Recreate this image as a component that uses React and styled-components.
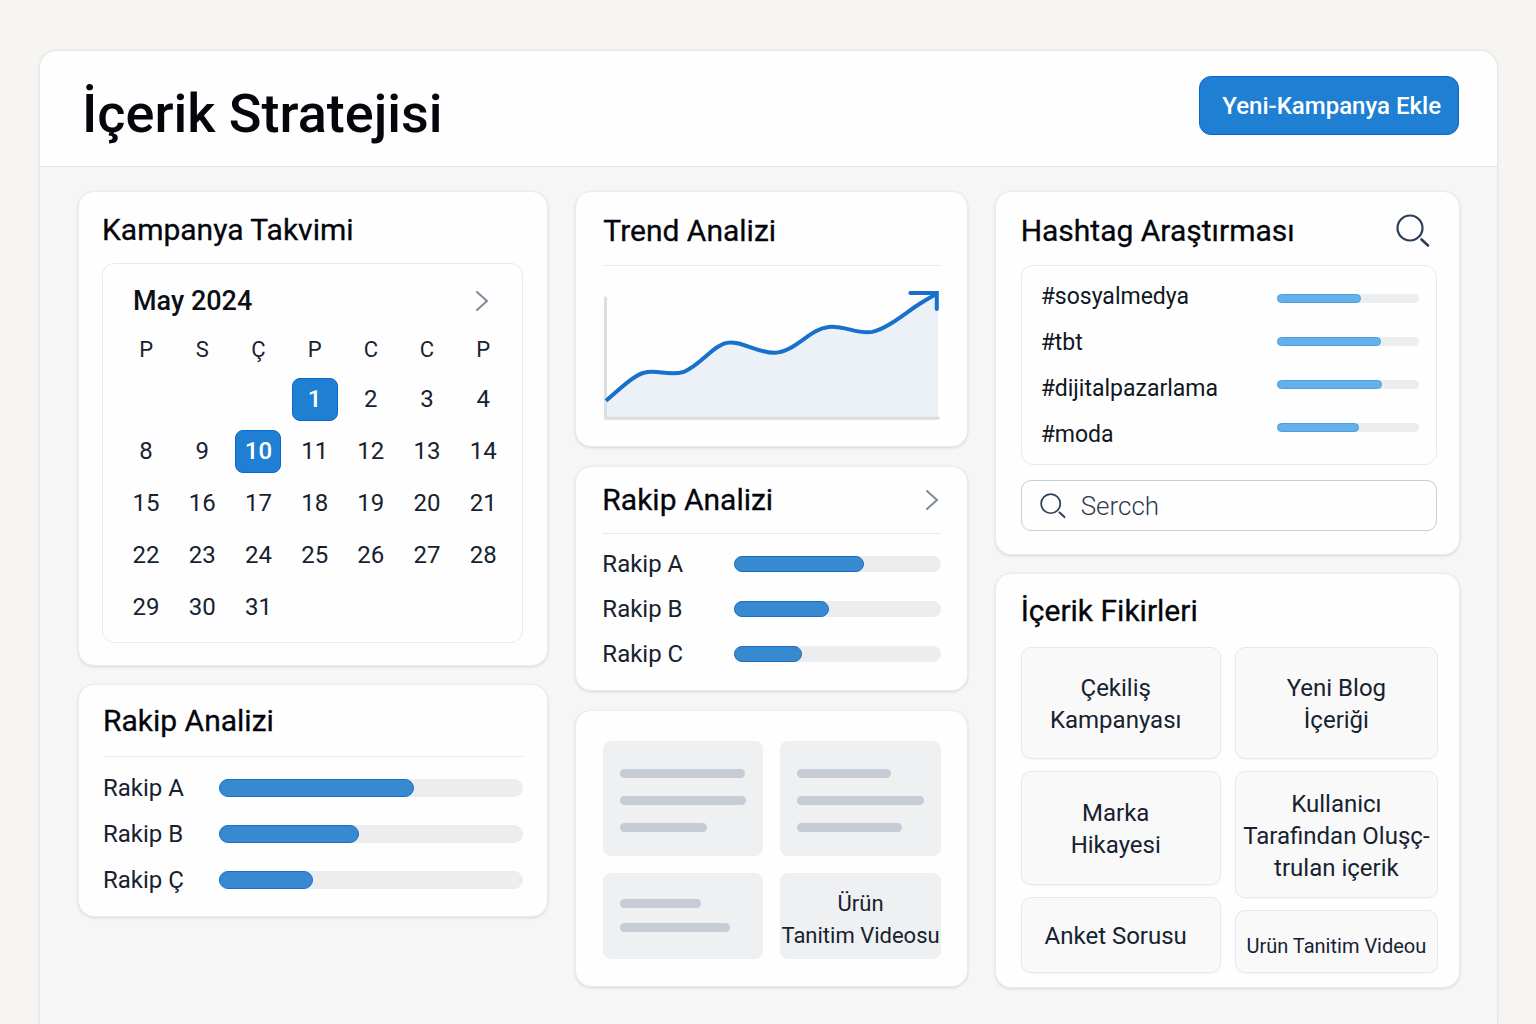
import React from "react";
import styled, { createGlobalStyle } from "styled-components";

const GlobalStyle = createGlobalStyle`
  * {
    box-sizing: border-box;
  }
  body {
    margin: 0;
    background-color: #f6f5f2;
    color: #17222f;
    font-family: Roboto, "Liberation Sans", sans-serif;
  }
  button {
    font-family: inherit;
    cursor: pointer;
  }
`;

const WEEK_DAYS = ["P", "S", "Ç", "P", "C", "C", "P"];
const WEEKS = [
  [null, null, null, 1, 2, 3, 4],
  [8, 9, 10, 11, 12, 13, 14],
  [15, 16, 17, 18, 19, 20, 21],
  [22, 23, 24, 25, 26, 27, 28],
  [29, 30, 31, null, null, null, null],
];
const CAMPAIGN_DAYS = [1, 10];

const RIVALS = [
  { name: "Rakip A", value: 64 },
  { name: "Rakip B", value: 46 },
  { name: "Rakip Ç", value: 31 },
];
const RIVALS_SHORT = [
  { name: "Rakip A", value: 63 },
  { name: "Rakip B", value: 46 },
  { name: "Rakip C", value: 33 },
];

const HASHTAGS = [
  { name: "#sosyalmedya", value: 59 },
  { name: "#tbt", value: 73 },
  { name: "#dijitalpazarlama", value: 74 },
  { name: "#moda", value: 58 },
];

const DRAFTS = [
  { id: 1, lines: [99, 100, 69] },
  { id: 2, lines: [74, 100, 83] },
  { id: 3, lines: [64, 87], short: true },
];

const IDEAS_LEFT = [
  { lines: ["Çekiliş", "Kampanyası"], height: 112 },
  { lines: ["Marka", "Hikayesi"], height: 114 },
  { lines: ["Anket Sorusu"], height: 76 },
];
const IDEAS_RIGHT = [
  { lines: ["Yeni Blog", "İçeriği"], height: 112 },
  { lines: ["Kullanicı", "Tarafindan Oluşç-", "trulan içerik"], height: 127 },
  { lines: ["Urün Tanitim Videou"], height: 63, small: true },
];

const Page = styled.div`
  display: flex;
  min-height: 100vh;
  padding: 50px 38px 0 39px;
`;
const Frame = styled.main`
  flex: 1;
  min-width: 0;
  background-color: #f6f6f7;
  border: 1px solid #e6e6e4;
  border-bottom: none;
  border-radius: 18px 18px 0 0;
  box-shadow: 0 0 4px rgba(0, 0, 0, 0.05);
  overflow: hidden;
`;
const Header = styled.header`
  display: flex;
  justify-content: space-between;
  align-items: flex-start;
  padding: 25px 38px 14px 42px;
  background-color: #fefefe;
  border-bottom: 1px solid #e4e5e6;
`;
const PageTitle = styled.h1`
  margin: 0;
  font-size: 54px;
  font-weight: 500;
  line-height: 76px;
  color: #04060c;
`;
const AddButton = styled.button`
  height: 59px;
  padding: 0 17px 0 22px;
  border: 1px solid #0b67cc;
  border-radius: 12px;
  background-color: #1f80d3;
  color: #ffffff;
  font-size: 24px;
  font-weight: 500;
`;
const Board = styled.div`
  display: grid;
  grid-template-columns: 470fr 392fr 465fr;
  gap: 27px;
  padding: 24px 37px 37px 38px;
`;
const Column = styled.div`
  display: flex;
  flex-direction: column;
  gap: ${(props) => props.$gap || 18}px;
  min-width: 0;
`;
const Card = styled.section`
  padding: ${(props) => props.$padding};
  border: 1px solid #ebebec;
  border-radius: 16px;
  background-color: #fefefe;
  box-shadow: 0 1px 3px rgba(0, 0, 0, 0.12);
`;
const CardHead = styled.div`
  display: flex;
  justify-content: space-between;
  align-items: center;
  height: ${(props) => props.$height}px;
  padding-right: ${(props) => props.$end || 0}px;
`;
const CardTitle = styled.h2`
  margin: 0;
  font-size: 30px;
  font-weight: 400;
  line-height: 40px;
  color: #04060c;
  -webkit-text-stroke: 0.3px #04060c;
`;
const IconButton = styled.button`
  display: flex;
  padding: 0;
  border: none;
  background: none;
  color: #7d8a98;
`;
const Divider = styled.hr`
  margin: 0;
  border: none;
  border-top: 1px solid #e6e8e9;
`;

const CalendarBox = styled.div`
  padding: 12px 11px 9px 15px;
  border: 1px solid #e8eaeb;
  border-radius: 12px;
`;
const MonthRow = styled.div`
  display: flex;
  justify-content: space-between;
  align-items: center;
  height: 50px;
  padding: 0 22px 0 15px;
`;
const Month = styled.h3`
  margin: 0;
  font-size: 27px;
  font-weight: 500;
  color: #0b0f16;
`;
const CalendarTable = styled.table`
  width: 100%;
  border-collapse: collapse;
  table-layout: fixed;
  th {
    height: 47px;
    padding: 0;
    font-size: 22px;
    font-weight: 400;
  }
  td {
    height: 52px;
    padding: 0;
  }
`;
const Day = styled.button`
  display: block;
  width: 46px;
  height: 43px;
  margin: 0 auto;
  padding: 0;
  border: 1px solid ${(props) => (props.$active ? "#0b67cc" : "transparent")};
  border-radius: 8px;
  background-color: ${(props) => (props.$active ? "#1f80d3" : "transparent")};
  color: ${(props) => (props.$active ? "#ffffff" : "#17222f")};
  font-size: 24px;
  font-weight: ${(props) => (props.$active ? 500 : 400)};
`;

const RivalList = styled.ul`
  margin: 0;
  padding: 8px 0 0;
  list-style: none;
`;
const RivalItem = styled.li`
  display: grid;
  grid-template-columns: ${(props) => props.$label}px 1fr;
  align-items: center;
  height: ${(props) => props.$height}px;
  font-size: 24px;
`;
const Track = styled.div`
  height: ${(props) => props.$height}px;
  border-radius: 9px;
  background-color: #ebedee;
`;
const Fill = styled.div`
  height: 100%;
  border: 1px solid ${(props) => (props.$light ? "#46a0e6" : "#1a6fc4")};
  border-radius: 9px;
  background-color: ${(props) => (props.$light ? "#66b0e8" : "#3789d0")};
`;

const Chart = styled.svg`
  display: block;
  width: 100%;
  height: auto;
  margin-top: 18px;
`;

const DraftGrid = styled.div`
  display: grid;
  grid-template-columns: repeat(2, minmax(0, 1fr));
  gap: 17px;
`;
const Draft = styled.div`
  display: flex;
  flex-direction: column;
  justify-content: center;
  gap: ${(props) => (props.$short ? 15 : 18)}px;
  height: ${(props) => (props.$short ? 86 : 115)}px;
  padding: ${(props) => (props.$short ? 0 : 4)}px 17px 0;
  border-radius: 8px;
  background-color: #eef0f2;
`;
const DraftLine = styled.div`
  width: ${(props) => props.$width}%;
  height: 9px;
  border-radius: 5px;
  background-color: #c6ccd6;
`;
const DraftText = styled.div`
  display: flex;
  flex-direction: column;
  justify-content: center;
  height: 86px;
  padding-top: 8px;
  border-radius: 8px;
  background-color: #eef0f2;
  font-size: 22px;
  line-height: 32px;
  text-align: center;
  white-space: nowrap;
`;

const TagBox = styled.div`
  display: flex;
  justify-content: space-between;
  height: 200px;
  padding: 8px 17px 0 19px;
  border: 1px solid #e8eaeb;
  border-radius: 12px;
`;
const TagList = styled.ul`
  margin: 0;
  padding: 0;
  list-style: none;
  font-size: 23px;
  line-height: 46px;
  color: #0f1722;
`;
const TagBars = styled.div`
  display: flex;
  flex-direction: column;
  gap: 34px;
  width: 142px;
  padding-top: 20px;
`;
const SearchField = styled.label`
  display: flex;
  align-items: center;
  gap: 15px;
  height: 51px;
  margin-top: 15px;
  padding: 0 18px;
  border: 1px solid #c6cdd4;
  border-radius: 10px;
`;
const SearchInput = styled.input`
  flex: 1;
  min-width: 0;
  padding: 0;
  border: none;
  outline: none;
  background: none;
  color: #2d3d4e;
  font-family: inherit;
  font-size: 26px;
  font-weight: 300;
  &::placeholder {
    color: #2d3d4e;
    opacity: 1;
  }
`;

const IdeaGrid = styled.div`
  display: grid;
  grid-template-columns: 200fr 203fr;
  gap: 14px;
`;
const IdeaColumn = styled.div`
  display: flex;
  flex-direction: column;
  gap: 12px;
`;
const Idea = styled.button`
  min-height: ${(props) => props.$height}px;
  padding: ${(props) => (props.$small ? 8 : 2)}px ${(props) => props.$end || 0}px 0 0;
  border: 1px solid #e6e8ea;
  border-radius: 10px;
  background-color: #f9f9fa;
  box-shadow: 0 1px 2px rgba(0, 0, 0, 0.04);
  color: #17222f;
  font-size: ${(props) => (props.$small ? 20 : 24)}px;
  line-height: 32px;
  white-space: nowrap;
  span {
    display: block;
  }
`;

function Chevron() {
  return (
    <svg width="14" height="22" viewBox="0 0 14 22" fill="none" stroke="currentColor" strokeWidth="2" strokeLinecap="round">
      <path d="M2 2 L12 11 L2 20" />
    </svg>
  );
}

function SearchIcon({ size }) {
  return (
    <svg width={size} height={size} viewBox="0 0 34 34" fill="none" stroke="#2b4056" strokeWidth="2.2" strokeLinecap="round">
      <circle cx="14" cy="14" r="12.5" />
      <path d="M25.5 25.5 L32 31.5" strokeWidth="2.6" />
    </svg>
  );
}

function Bar({ name, value, height, light }) {
  return (
    <Track $height={height} role="meter" aria-label={name} aria-valuemin={0} aria-valuemax={100} aria-valuenow={value}>
      <Fill $light={light} style={{ width: `${value}%` }} />
    </Track>
  );
}

function Rivals({ items, label, rowHeight, barHeight }) {
  return (
    <RivalList>
      {items.map((item) => (
        <RivalItem key={item.name} $label={label} $height={rowHeight}>
          <span>{item.name}</span>
          <Bar name={item.name} value={item.value} height={barHeight} />
        </RivalItem>
      ))}
    </RivalList>
  );
}

function Calendar() {
  return (
    <CalendarBox>
      <MonthRow>
        <Month>May 2024</Month>
        <IconButton aria-label="Sonraki ay">
          <Chevron />
        </IconButton>
      </MonthRow>
      <CalendarTable>
        <thead>
          <tr>
            {WEEK_DAYS.map((day, index) => (
              <th key={index} scope="col">
                {day}
              </th>
            ))}
          </tr>
        </thead>
        <tbody>
          {WEEKS.map((week, row) => (
            <tr key={row}>
              {week.map((day, index) => (
                <td key={index}>{day ? <Day $active={CAMPAIGN_DAYS.includes(day)}>{day}</Day> : null}</td>
              ))}
            </tr>
          ))}
        </tbody>
      </CalendarTable>
    </CalendarBox>
  );
}

function TrendChart() {
  const line =
    "M3 117 C18 104 32 91 41 89 C53 85 66 93 81 88 C97 82 111 61 124 59 C137 56 154 69 172 69 C193 68 207 45 226 43 C241 41 256 51 270 48 C286 44 303 29 317 20 Q325 15 334 10";
  return (
    <Chart viewBox="0 0 338 138" fill="none" role="img" aria-label="Trend grafiği">
      <path d={`${line} H336 V134 H3 Z`} fill="#ecf1f7" />
      <path d="M2.5 14 V134.5 H336" stroke="#d9dee2" strokeWidth="3" strokeLinecap="round" strokeLinejoin="round" />
      <path d={line} stroke="#1670cc" strokeWidth="4" />
      <path d="M308 9 L334.5 9 V25" stroke="#1670cc" strokeWidth="4" strokeLinecap="round" />
    </Chart>
  );
}

function Ideas({ items, end }) {
  return (
    <IdeaColumn>
      {items.map((item) => (
        <Idea key={item.lines[0]} $height={item.height} $small={item.small} $end={end}>
          {item.lines.map((text) => (
            <span key={text}>{text}</span>
          ))}
        </Idea>
      ))}
    </IdeaColumn>
  );
}

function App() {
  return (
    <Page>
      <GlobalStyle />
      <Frame>
        <Header>
          <PageTitle>İçerik Stratejisi</PageTitle>
          <AddButton>Yeni-Kampanya Ekle</AddButton>
        </Header>
        <Board>
          <Column>
            <Card $padding="5px 24px 22px 23px">
              <CardHead $height={66}>
                <CardTitle>Kampanya Takvimi</CardTitle>
              </CardHead>
              <Calendar />
            </Card>
            <Card $padding="0 24px 13px">
              <CardHead $height={71}>
                <CardTitle>Rakip Analizi</CardTitle>
              </CardHead>
              <Divider />
              <Rivals items={RIVALS} label={116} rowHeight={46} barHeight={18} />
            </Card>
          </Column>
          <Column $gap={19}>
            <Card $padding="5px 26px 24px 27px">
              <CardHead $height={68}>
                <CardTitle>Trend Analizi</CardTitle>
              </CardHead>
              <Divider />
              <TrendChart />
            </Card>
            <Card $padding="0 26px 13px">
              <CardHead $height={66} $end={2}>
                <CardTitle>Rakip Analizi</CardTitle>
                <IconButton aria-label="Rakip detayları">
                  <Chevron />
                </IconButton>
              </CardHead>
              <Divider />
              <Rivals items={RIVALS_SHORT} label={132} rowHeight={45} barHeight={16} />
            </Card>
            <Card $padding="30px 26px 27px 27px">
              <DraftGrid>
                {DRAFTS.map((draft) => (
                  <Draft key={draft.id} $short={draft.short}>
                    {draft.lines.map((width, index) => (
                      <DraftLine key={index} $width={width} />
                    ))}
                  </Draft>
                ))}
                <DraftText>
                  <span>Ürün</span>
                  <span>Tanitim Videosu</span>
                </DraftText>
              </DraftGrid>
            </Card>
          </Column>
          <Column>
            <Card $padding="5px 22px 23px 25px">
              <CardHead $height={68} $end={7}>
                <CardTitle>Hashtag Araştırması</CardTitle>
                <IconButton aria-label="Hashtag ara">
                  <SearchIcon size={34} />
                </IconButton>
              </CardHead>
              <TagBox>
                <TagList>
                  {HASHTAGS.map((tag) => (
                    <li key={tag.name}>{tag.name}</li>
                  ))}
                </TagList>
                <TagBars>
                  {HASHTAGS.map((tag) => (
                    <Bar key={tag.name} name={tag.name} value={tag.value} height={9} light />
                  ))}
                </TagBars>
              </TagBox>
              <SearchField>
                <SearchIcon size={26} />
                <SearchInput type="search" placeholder="Sercch" aria-label="Sercch" />
              </SearchField>
            </Card>
            <Card $padding="0 21px 14px 25px">
              <CardHead $height={73}>
                <CardTitle>İçerik Fikirleri</CardTitle>
              </CardHead>
              <IdeaGrid>
                <Ideas items={IDEAS_LEFT} end={10} />
                <Ideas items={IDEAS_RIGHT} />
              </IdeaGrid>
            </Card>
          </Column>
        </Board>
      </Frame>
    </Page>
  );
}

export default App;
